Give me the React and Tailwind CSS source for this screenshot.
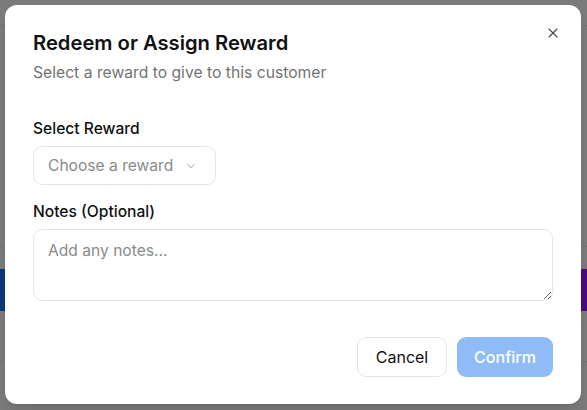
import React from 'react'

const App = () => {
  return (
    <div className="relative w-[587px] h-[410px] overflow-hidden bg-[#7b7b7b] font-['Inter',sans-serif]">
      {/* page behind the overlay */}
      <div className="flex flex-col h-full">
        <div className="h-[26px] border-b border-[#727272]" />
        <div className="h-[221px] border-b border-[#727272]" />
        <div className="h-[22px]" />
        <div className="h-[42px] bg-gradient-to-r from-[#0b3a78] via-[#2c2a7a] to-[#4a0a82]" />
        <div className="h-[51px] border-b border-[#727272]" />
      </div>

      {/* dialog */}
      <div className="absolute left-[5px] top-[5px] w-[576px] h-[399px] bg-white rounded-[12px] shadow-lg px-[28px] pt-[24px] pb-[27px] flex flex-col">
        <button className="absolute right-[20px] top-[20px] text-[#444] w-[16px] h-[16px] flex items-center justify-center">
          <svg width="16" height="16" viewBox="0 0 24 24" fill="none" stroke="currentColor" strokeWidth="1.6" strokeLinecap="round">
            <path d="M18 6 6 18" />
            <path d="m6 6 12 12" />
          </svg>
        </button>

        <h2 className="text-[20.2px] leading-[28px] font-semibold text-[#111]">Redeem or Assign Reward</h2>
        <p className="mt-[6px] text-[15.7px] leading-[20px] text-[#737373]">Select a reward to give to this customer</p>

        <label className="mt-[36px] text-[15.6px] leading-[20px] font-medium text-[#111]">Select Reward</label>
        <div className="mt-[7px] w-[183px] h-[39px] border border-[#e5e5e5] rounded-[9px] flex items-center pl-[14px] pr-[12px] gap-[11px]">
          <span className="text-[15.6px] text-[#8a8a8a]">Choose a reward</span>
          <svg width="14" height="14" viewBox="0 0 24 24" fill="none" stroke="#b0b0b0" strokeWidth="1.8" strokeLinecap="round" strokeLinejoin="round">
            <path d="m6 9 6 6 6-6" />
          </svg>
        </div>

        <label className="mt-[17px] text-[15.6px] leading-[20px] font-medium text-[#111]">Notes (Optional)</label>
        <textarea
          className="mt-[7px] w-full h-[72px] border border-[#e5e5e5] rounded-[9px] px-[14px] py-[10px] text-[15.6px] leading-[22px] text-[#111] placeholder-[#8a8a8a] outline-none resize-y"
          placeholder="Add any notes..."
        />

        <div className="mt-auto flex justify-end gap-[10px]">
          <button className="w-[90px] h-[40px] border border-[#e5e5e5] rounded-[9px] text-[16px] text-[#111] bg-white">Cancel</button>
          <button className="w-[96px] h-[40px] rounded-[9px] text-[16px] font-medium text-white bg-[#8fbcf6]">Confirm</button>
        </div>
      </div>
    </div>
  )
}

export default App
